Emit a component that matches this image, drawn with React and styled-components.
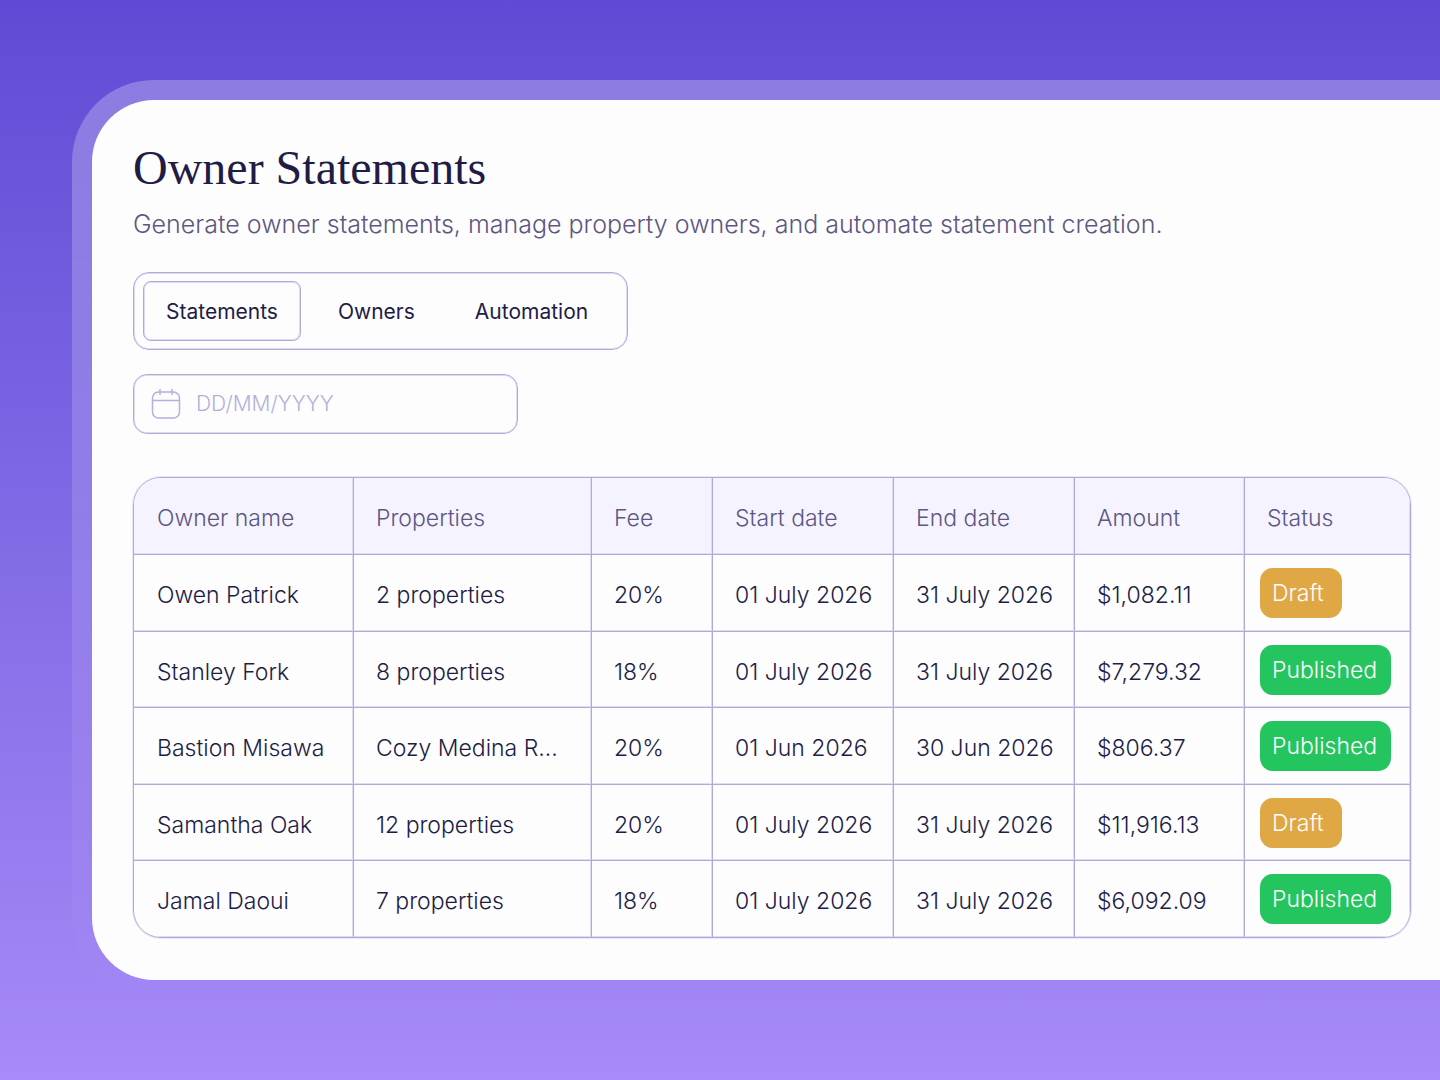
import React, { useState } from 'react';
import styled, { createGlobalStyle } from 'styled-components';

const GlobalStyle = createGlobalStyle`
  * {
    box-sizing: border-box;
  }

  body {
    margin: 0;
    font-family: 'Inter', 'Liberation Sans', sans-serif;
    font-weight: 300;
    color: #211c45;
  }
`;

const Page = styled.div`
  min-height: 100vh;
  padding: 80px 0 80px 72px;
  background: linear-gradient(180deg, #604ad5 0%, #6d58dc 20%, #9a7ff1 83%, #a78bfa 100%);
`;

const Frame = styled.div`
  padding: 20px 0 20px 20px;
  border-radius: 82px 0 0 82px;
  background: linear-gradient(180deg, rgba(255, 255, 255, 0.26) 0%, rgba(255, 255, 255, 0) 100%);
`;

const Panel = styled.main`
  padding: 40px 29px 42px 41px;
  border-radius: 62px 0 0 62px;
  background: #fdfdfe;
`;

const Title = styled.h1`
  margin: 0;
  font-family: 'Liberation Serif', serif;
  font-size: 48px;
  font-weight: 400;
  line-height: 56px;
`;

const Subtitle = styled.p`
  margin: 10px 0 30px;
  font-size: 25px;
  line-height: 36px;
  color: #5d5781;
`;

const Tabs = styled.div`
  display: flex;
  gap: 14px;
  width: fit-content;
  padding: 8px 16px 8px 9px;
  margin-bottom: 24px;
  border: 1px solid #aeabdb;
  border-radius: 16px;
  box-shadow: inset 0 0 0 1px #dedcf1;
`;

const Tab = styled.button`
  height: 60px;
  padding: 0 22px;
  border: 1px solid ${(props) => (props.$active ? '#aeabdb' : 'transparent')};
  border-radius: 8px;
  box-shadow: ${(props) => (props.$active ? 'inset 0 0 0 1px #dedcf1' : 'none')};
  background: none;
  font-family: inherit;
  font-size: 21px;
  font-weight: 400;
  color: #211c45;
  cursor: pointer;
`;

const DateField = styled.label`
  display: flex;
  align-items: center;
  gap: 14px;
  width: 385px;
  height: 60px;
  padding: 0 16px;
  margin-bottom: 43px;
  border: 1px solid #aeabdb;
  border-radius: 14px;
  box-shadow: inset 0 0 0 1px #dedcf1;
`;

const DateInput = styled.input`
  flex: 1;
  min-width: 0;
  padding: 0 0 2px;
  border: none;
  outline: none;
  background: none;
  font-family: inherit;
  font-size: 21px;
  font-weight: 300;
  color: #211c45;

  &::placeholder {
    color: #b3b0dc;
    opacity: 1;
  }
`;

const TableWrap = styled.div`
  overflow: hidden;
  border: 1px solid #aeabdb;
  border-radius: 28px;
  box-shadow: 0 0 0 1px #e8e7f6;
`;

const Table = styled.table`
  width: 100%;
  table-layout: fixed;
  border-collapse: separate;
  border-spacing: 0;
  font-size: 23px;
`;

const HeadCell = styled.th`
  height: 77px;
  padding: 4px 0 0 22px;
  border-right: 1px solid #aeabdb;
  border-bottom: 1px solid #aeabdb;
  box-shadow: inset -1px -1px 0 #dedcf1;
  background: #f5f3ff;
  font-weight: 300;
  text-align: left;
  color: #5d5781;

  &:first-child {
    padding-left: 23px;
  }

  &:last-child {
    border-right: none;
  }
`;

const Cell = styled.td`
  height: 77px;
  padding: ${(props) => (props.$badge ? '0 0 0 15px' : '4px 0 0 22px')};
  border-right: 1px solid #aeabdb;
  border-bottom: 1px solid #aeabdb;
  box-shadow: inset -1px -1px 0 #dedcf1;
  white-space: nowrap;

  &:first-child {
    padding-left: 23px;
  }

  &:last-child {
    border-right: none;
  }

  tr:nth-child(even) > & {
    height: 76px;
  }

  tr:last-child > & {
    height: 76px;
    border-bottom: none;
  }
`;

const Badge = styled.span`
  display: inline-block;
  min-width: 82px;
  padding: 0 14px 0 12px;
  border-radius: 13px;
  background: ${(props) => (props.$status === 'Draft' ? '#dfa845' : '#24c55f')};
  line-height: 50px;
  color: #fdfdfe;
`;

const tabs = ['Statements', 'Owners', 'Automation'];

const columns = [
  { label: 'Owner name', width: 220 },
  { label: 'Properties', width: 238 },
  { label: 'Fee', width: 121 },
  { label: 'Start date', width: 181 },
  { label: 'End date', width: 181 },
  { label: 'Amount', width: 170 },
  { label: 'Status' },
];

const statements = [
  { owner: 'Owen Patrick', properties: '2 properties', fee: '20%', start: '01 July 2026', end: '31 July 2026', amount: '$1,082.11', status: 'Draft' },
  { owner: 'Stanley Fork', properties: '8 properties', fee: '18%', start: '01 July 2026', end: '31 July 2026', amount: '$7,279.32', status: 'Published' },
  { owner: 'Bastion Misawa', properties: 'Cozy Medina R...', fee: '20%', start: '01 Jun 2026', end: '30 Jun 2026', amount: '$806.37', status: 'Published' },
  { owner: 'Samantha Oak', properties: '12 properties', fee: '20%', start: '01 July 2026', end: '31 July 2026', amount: '$11,916.13', status: 'Draft' },
  { owner: 'Jamal Daoui', properties: '7 properties', fee: '18%', start: '01 July 2026', end: '31 July 2026', amount: '$6,092.09', status: 'Published' },
];

const CalendarIcon = () => (
  <svg width="32" height="32" viewBox="0 0 32 32" fill="none" stroke="#b3b0dc" strokeWidth="1.5" aria-hidden="true">
    <rect x="2.5" y="4" width="27" height="26" rx="6" />
    <path d="M2.5 12.5h27M10 1v6M22 1v6" />
  </svg>
);

const App = () => {
  const [activeTab, setActiveTab] = useState('Statements');
  const [date, setDate] = useState('');

  return (
    <Page>
      <GlobalStyle />
      <Frame>
        <Panel>
          <Title>Owner Statements</Title>
          <Subtitle>
            Generate owner statements, manage property owners, and automate statement creation.
          </Subtitle>

          <Tabs role="tablist">
            {tabs.map((tab) => (
              <Tab
                key={tab}
                type="button"
                role="tab"
                aria-selected={tab === activeTab}
                $active={tab === activeTab}
                onClick={() => setActiveTab(tab)}
              >
                {tab}
              </Tab>
            ))}
          </Tabs>

          <DateField>
            <CalendarIcon />
            <DateInput
              type="text"
              name="date"
              aria-label="Date"
              placeholder="DD/MM/YYYY"
              value={date}
              onChange={(e) => setDate(e.target.value)}
            />
          </DateField>

          <TableWrap>
            <Table>
              <colgroup>
                {columns.map((column) => (
                  <col key={column.label} width={column.width} />
                ))}
              </colgroup>
              <thead>
                <tr>
                  {columns.map((column) => (
                    <HeadCell key={column.label} scope="col">{column.label}</HeadCell>
                  ))}
                </tr>
              </thead>
              <tbody>
                {statements.map((row) => (
                  <tr key={row.owner}>
                    <Cell>{row.owner}</Cell>
                    <Cell>{row.properties}</Cell>
                    <Cell>{row.fee}</Cell>
                    <Cell>{row.start}</Cell>
                    <Cell>{row.end}</Cell>
                    <Cell>{row.amount}</Cell>
                    <Cell $badge>
                      <Badge $status={row.status}>{row.status}</Badge>
                    </Cell>
                  </tr>
                ))}
              </tbody>
            </Table>
          </TableWrap>
        </Panel>
      </Frame>
    </Page>
  );
};

export default App;
